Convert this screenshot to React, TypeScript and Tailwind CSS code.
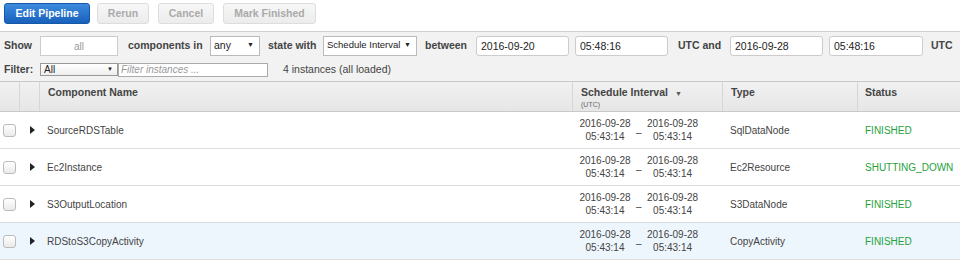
import type { ReactNode } from 'react';

const rows = [
  { name: 'SourceRDSTable', type: 'SqlDataNode', status: 'FINISHED', active: false },
  { name: 'Ec2Instance', type: 'Ec2Resource', status: 'SHUTTING_DOWN', active: false },
  { name: 'S3OutputLocation', type: 'S3DataNode', status: 'FINISHED', active: false },
  { name: 'RDStoS3CopyActivity', type: 'CopyActivity', status: 'FINISHED', active: true },
];

const Label = ({ children, className = '' }: { children: ReactNode; className?: string }) => (
  <span className={`text-[10.5px] font-bold text-[#444] ${className}`}>{children}</span>
);

const TextBox = ({ value, className = '' }: { value: string; className?: string }) => (
  <div
    className={`h-[20px] rounded-[3px] border border-[#ccc] bg-white pl-[4px] text-[10.5px] leading-[18px] text-[#222] ${className}`}
  >
    {value}
  </div>
);

const Dropdown = ({ value, className = '' }: { value: string; className?: string }) => (
  <div
    className={`flex h-[20px] items-center justify-between border border-[#bbb] bg-white pl-[3px] pr-[5px] text-[#222] ${className}`}
  >
    <span>{value}</span>
    <span className="text-[7px]">▼</span>
  </div>
);

const Interval = () => (
  <div className="flex items-center whitespace-nowrap text-[10px] leading-[13px] text-[#444]">
    <div className="flex w-[52px] flex-col items-center">
      <span>2016-09-28</span>
      <span>05:43:14</span>
    </div>
    <span className="mx-[5px] mt-[4px]">–</span>
    <div className="flex w-[52px] flex-col items-center">
      <span>2016-09-28</span>
      <span>05:43:14</span>
    </div>
  </div>
);

export default function App() {
  return (
    <div className="h-[260px] w-[960px] overflow-hidden bg-white font-['Liberation_Sans',Arial,sans-serif]">
      {/* Actions */}
      <div className="flex h-[31px] items-start gap-[9px] pl-[4px] pt-[3px]">
        <button className="h-[21px] w-[86px] rounded-[3px] border border-[#1658a8] bg-gradient-to-b from-[#3d8ade] to-[#1761bd] text-[10.5px] font-bold text-white">
          Edit Pipeline
        </button>
        <button className="-ml-[2px] h-[21px] w-[52px] rounded-[3px] border border-[#ddd] bg-gradient-to-b from-[#f7f7f7] to-[#ececec] text-[10.5px] font-bold text-[#aaa]">
          Rerun
        </button>
        <button className="h-[21px] w-[56px] rounded-[3px] border border-[#ddd] bg-gradient-to-b from-[#f7f7f7] to-[#ececec] text-[10.5px] font-bold text-[#aaa]">
          Cancel
        </button>
        <button className="h-[21px] w-[93px] rounded-[3px] border border-[#ddd] bg-gradient-to-b from-[#f7f7f7] to-[#ececec] text-[10.5px] font-bold text-[#aaa]">
          Mark Finished
        </button>
      </div>

      {/* Filters */}
      <div className="h-[50px] border-t border-[#cfcfcf] bg-[#f2f2f2]">
        <div className="flex h-[26px] items-center pl-[4px] pt-[1px]">
          <Label className="w-[36px]">Show</Label>
          <div className="h-[20px] w-[78px] border border-[#ccc] bg-white text-center text-[10px] leading-[19px] text-[#999]">
            all
          </div>
          <Label className="ml-[10px] w-[82px]">components in</Label>
          <Dropdown value="any" className="w-[50px] text-[10.5px]" />
          <Label className="ml-[8px] w-[55px]">state with</Label>
          <Dropdown value="Schedule Interval" className="w-[94px] text-[9.5px]" />
          <Label className="ml-[8px] w-[51px]">between</Label>
          <TextBox value="2016-09-20" className="w-[93px]" />
          <TextBox value="05:48:16" className="ml-[6px] w-[93px]" />
          <Label className="ml-[10px] w-[52px]">UTC and</Label>
          <TextBox value="2016-09-28" className="w-[93px]" />
          <TextBox value="05:48:16" className="ml-[6px] w-[94px]" />
          <Label className="ml-[8px]">UTC</Label>
        </div>
        <div className="flex h-[23px] items-center pl-[4px]">
          <Label className="w-[36px]">Filter:</Label>
          <div className="flex h-[13px] w-[78px] items-center justify-between border border-[#999] bg-gradient-to-b from-white to-[#eee] pl-[3px] pr-[4px] text-[10px] text-[#222]">
            <span>All</span>
            <span className="text-[6px]">▼</span>
          </div>
          <div className="h-[14px] w-[150px] border border-[#aaa] bg-white pl-[2px] text-[10px] italic leading-[12px] text-[#999]">
            Filter instances ...
          </div>
          <span className="ml-[15px] text-[10.5px] text-[#444]">4 instances (all loaded)</span>
        </div>
      </div>

      {/* Table header */}
      <div className="grid h-[31px] grid-cols-[20px_20px_533px_150px_135px_1fr] border-y border-[#c9c9c9] bg-gradient-to-b from-[#f1f1f1] to-[#e6e6e6] text-[10.5px] font-bold text-[#444]">
        <div className="border-r border-[#d6d6d6]" />
        <div className="border-r border-[#d6d6d6]" />
        <div className="border-r border-[#d6d6d6] pl-[8px] pt-[3px]">Component Name</div>
        <div className="border-r border-[#d6d6d6] pl-[8px] pt-[3px]">
          <div className="flex items-center">
            <span>Schedule Interval</span>
            <span className="ml-[7px] mt-[3px] text-[7px] text-[#555]">▼</span>
          </div>
          <div className="-mt-[1px] text-[7px] font-normal text-[#666]">(UTC)</div>
        </div>
        <div className="border-r border-[#d6d6d6] pl-[8px] pt-[3px]">Type</div>
        <div className="pl-[7px] pt-[3px]">Status</div>
      </div>

      {/* Rows */}
      {rows.map((row) => (
        <div
          key={row.name}
          className={`grid h-[37px] grid-cols-[20px_20px_533px_150px_135px_1fr] items-center border-b border-[#ddd] text-[10px] text-[#444] ${
            row.active ? 'bg-[#eef6fd]' : 'bg-white'
          }`}
        >
          <div className="pl-[3px]">
            <div className="h-[13px] w-[13px] rounded-[3px] border border-[#bbb] bg-gradient-to-b from-white to-[#eaeaea]" />
          </div>
          <div className="pl-[10px]">
            <svg width="5" height="8" viewBox="0 0 5 8">
              <path d="M0 0 L5 4 L0 8 Z" fill="#222" />
            </svg>
          </div>
          <div className="pl-[7px]">{row.name}</div>
          <div className="pl-[6px]">
            <Interval />
          </div>
          <div className="pl-[7px]">{row.type}</div>
          <div className="pl-[7px] text-[#1fa23a]">{row.status}</div>
        </div>
      ))}
    </div>
  );
}
